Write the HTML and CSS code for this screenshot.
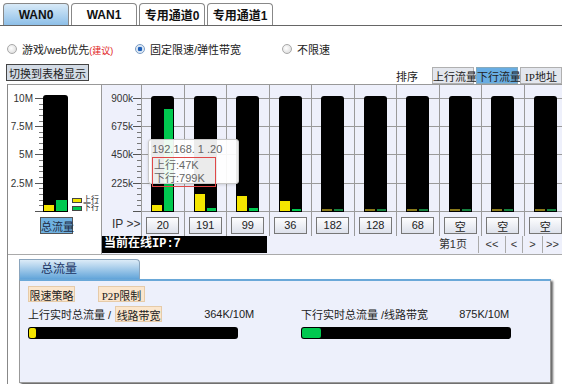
FILE: index.html
```html
<!DOCTYPE html>
<html lang="zh-CN">
<head>
  <meta charset="UTF-8">
  <title>流量监控</title>
  <link rel="stylesheet" href="styles.css">
</head>
<body>

  <div class="tabs">
    <a class="tab active">WAN0</a>
    <a class="tab">WAN1</a>
    <a class="tab">专用通道0</a>
    <a class="tab">专用通道1</a>
  </div>

  <div class="modes">
    <label class="mode mode-game"><span class="radio"></span><span>游戏/web优先<em>(建议)</em></span></label>
    <label class="mode mode-fixed"><span class="radio checked"></span><span>固定限速/弹性带宽</span></label>
    <label class="mode"><span class="radio"></span><span>不限速</span></label>
  </div>

  <div class="toolbar">
    <button class="btn-switch">切换到表格显示</button>
    <div class="sort">
      <span class="sort-label">排序</span>
      <button class="sort-btn">上行流量</button>
      <button class="sort-btn active">下行流量</button>
      <button class="sort-btn serif">IP地址</button>
    </div>
  </div>

  <div class="stats">
    <div class="chart">
      <!-- total traffic -->
      <div class="total">
        <div class="total-plot">
          <div class="axis total-axis">
            <div class="tick-label">10M</div>
            <div class="tick-label">7.5M</div>
            <div class="tick-label">5M</div>
            <div class="tick-label">2.5M</div>
          </div>
          <div class="total-bar">
            <span class="up" style="height:6px"></span>
            <span class="down" style="height:11px"></span>
          </div>
          <div class="legend">
            <div class="legend-item"><span class="swatch up"></span>上行</div>
            <div class="legend-item"><span class="swatch down"></span>下行</div>
          </div>
        </div>
        <button class="total-btn">总流量</button>
      </div>

      <!-- per ip traffic -->
      <div class="main">
        <div class="plot">
          <div class="yaxis">
            <div class="axis main-axis">
              <div class="tick-label">900k</div>
              <div class="tick-label">675k</div>
              <div class="tick-label">450k</div>
              <div class="tick-label">225k</div>
            </div>
            <div class="ip-title">IP &gt;&gt;</div>
          </div>

          <div class="col">
            <div class="cell"><div class="bar"><span class="up" style="height:6px"></span><span class="down" style="height:102px"></span></div></div>
            <div class="ip-cell"><button class="ip-btn">20</button></div>
          </div>
          <div class="col">
            <div class="cell"><div class="bar"><span class="up" style="height:17px"></span><span class="down" style="height:3px"></span></div></div>
            <div class="ip-cell"><button class="ip-btn">191</button></div>
          </div>
          <div class="col">
            <div class="cell"><div class="bar"><span class="up" style="height:15px"></span><span class="down" style="height:3px"></span></div></div>
            <div class="ip-cell"><button class="ip-btn">99</button></div>
          </div>
          <div class="col">
            <div class="cell"><div class="bar"><span class="up" style="height:10px"></span><span class="down" style="height:2px"></span></div></div>
            <div class="ip-cell"><button class="ip-btn">36</button></div>
          </div>
          <div class="col">
            <div class="cell"><div class="bar"><span class="up idle"></span><span class="down idle"></span></div></div>
            <div class="ip-cell"><button class="ip-btn">182</button></div>
          </div>
          <div class="col">
            <div class="cell"><div class="bar"><span class="up idle"></span><span class="down idle"></span></div></div>
            <div class="ip-cell"><button class="ip-btn">128</button></div>
          </div>
          <div class="col">
            <div class="cell"><div class="bar"><span class="up idle"></span><span class="down idle"></span></div></div>
            <div class="ip-cell"><button class="ip-btn">68</button></div>
          </div>
          <div class="col">
            <div class="cell"><div class="bar"><span class="up idle"></span><span class="down idle"></span></div></div>
            <div class="ip-cell"><button class="ip-btn">空</button></div>
          </div>
          <div class="col">
            <div class="cell"><div class="bar"><span class="up idle"></span><span class="down idle"></span></div></div>
            <div class="ip-cell"><button class="ip-btn">空</button></div>
          </div>
          <div class="col">
            <div class="cell"><div class="bar"><span class="up idle"></span><span class="down idle"></span></div></div>
            <div class="ip-cell"><button class="ip-btn">空</button></div>
          </div>
        </div>

        <div class="status">
          <div class="online">当前在线IP:7</div>
          <div class="pager">
            <span class="page-no">第1页</span>
            <a class="page-link first">&lt;&lt;</a>
            <a class="page-link">&lt;</a>
            <a class="page-link">&gt;</a>
            <a class="page-link">&gt;&gt;</a>
          </div>
        </div>

        <div class="tooltip">
          <div class="tip-ip">192.168. 1 .20</div>
          <div class="tip-box">
            <div>上行:47K</div>
            <div>下行:799K</div>
          </div>
        </div>
      </div>
    </div>

    <div class="summary">
      <div class="summary-tab">总流量</div>
      <div class="summary-panel">
        <div class="policy-row">
          <button class="policy-btn">限速策略</button>
          <button class="policy-btn serif">P2P限制</button>
        </div>
        <div class="flow-row">
          <div class="flow">
            <div class="flow-head">
              <span>上行实时总流量 /</span>
              <button class="policy-btn bw-btn">线路带宽</button>
              <span class="flow-value up-value">364K/10M</span>
            </div>
            <div class="meter"><span class="meter-fill up" style="width:7px"></span></div>
          </div>
          <div class="flow">
            <div class="flow-head">
              <span>下行实时总流量 /线路带宽</span>
              <span class="flow-value down-value">875K/10M</span>
            </div>
            <div class="meter"><span class="meter-fill down" style="width:19px"></span></div>
          </div>
        </div>
      </div>
    </div>
  </div>

</body>
</html>
```

FILE: styles.css
```css
* {
  margin: 0;
  padding: 0;
  box-sizing: border-box;
}

body {
  width: 562px;
  height: 384px;
  overflow: hidden;
  font-family: "Liberation Sans", "Noto Sans CJK SC", sans-serif;
  font-size: 11px;
  color: #222;
  background-color: #fff;
}

button {
  padding: 0;
  font-family: inherit;
  font-size: 11px;
  color: #222;
  white-space: nowrap;
}

.serif {
  font-family: "Liberation Serif", "Noto Sans CJK SC", serif;
}

/* tabs */
.tabs {
  display: flex;
  gap: 2px;
  height: 26px;
  padding: 3px 0 0 3px;
  border-bottom: 1px solid #666;
}

.tab {
  width: 66px;
  height: 22px;
  display: flex;
  align-items: center;
  justify-content: center;
  border: 1px solid #888;
  border-bottom: none;
  border-radius: 4px 4px 0 0;
  background-color: #fff;
  font-size: 12px;
  font-weight: bold;
  color: #111;
}

.tab.active {
  background: linear-gradient(#d8eaf8, #8dbfe8);
}

/* modes */
.modes {
  display: flex;
  align-items: center;
  height: 18px;
  margin-top: 14px;
  padding-left: 7px;
}

.mode {
  display: flex;
  align-items: center;
  gap: 5px;
}

.mode-game {
  width: 128px;
}

.mode-fixed {
  width: 147px;
}

.mode em {
  font-style: normal;
  font-size: 9px;
  color: #e02020;
}

.radio {
  width: 10px;
  height: 10px;
  border: 1px solid #a8a8a8;
  border-radius: 50%;
  background: radial-gradient(circle at 40% 40%, #fff, #d6d6d6);
}

.radio.checked {
  background: radial-gradient(circle, #1e5fb8 0 2px, #cfe0f2 2.5px, #e8eef5 4px);
  border-color: #7a9cc4;
}

/* toolbar */
.toolbar {
  display: flex;
  justify-content: space-between;
  align-items: flex-end;
  height: 20px;
  margin-top: 6px;
  padding-left: 6px;
}

.btn-switch {
  height: 17px;
  margin-bottom: 3px;
  padding: 0 2px;
  border: 1px solid #444;
  background-color: #d3dbe5;
}

.sort {
  display: flex;
  align-items: flex-end;
  gap: 2px;
}

.sort-label {
  margin-right: 12px;
  line-height: 14px;
  font-size: 11px;
}

.sort-btn {
  width: 42px;
  height: 17px;
  border: 1px solid #b0b0b0;
  background-color: #e3e6ed;
}

.sort-btn.active {
  background-color: #68ade3;
  border-color: #8ab;
}

/* stats frame */
.stats {
  height: 300px;
  margin-left: 7px;
  border-left: 1px solid #888;
}

.chart {
  display: flex;
  height: 171px;
  border-top: 1px solid #999;
  border-bottom: 1px solid #aaa;
}

.total {
  width: 94px;
  flex: none;
  background-color: #fff;
  border-right: 1px solid #999;
}

.total-plot {
  display: flex;
  height: 127px;
}

.axis {
  padding-top: 8px;
  text-align: right;
  font-size: 10px;
  color: #333;
  background-image:
    repeating-linear-gradient(#555 0 1px, transparent 1px 28.2px),
    repeating-linear-gradient(#777 0 1px, transparent 1px 5.64px);
  background-repeat: no-repeat;
  background-size: 8px 114px, 4px 114px;
  background-position: right 0 top 13px, right 0 top 13px;
}

.tick-label {
  height: 28.2px;
  line-height: 12px;
}

.total-axis {
  width: 35px;
  flex: none;
  padding-right: 10px;
}

.total-bar {
  display: flex;
  flex: none;
  align-items: flex-end;
  gap: 2px;
  width: 25px;
  height: 117px;
  margin-top: 10px;
  padding: 0 1px 1px;
  background-color: #000;
  border-radius: 3px 3px 0 0;
}

.up {
  background-color: #f4e500;
}

.down {
  background-color: #00c94f;
}

.total-bar .up {
  width: 10px;
}

.total-bar .down {
  width: 11px;
}

.legend {
  flex: none;
  align-self: flex-end;
  margin-left: 4px;
  font-size: 8px;
  line-height: 8px;
  white-space: nowrap;
}

.legend-item {
  display: flex;
  align-items: center;
  height: 8px;
}

.swatch {
  width: 10px;
  height: 5px;
  margin-right: 1px;
  border: 1px solid #444;
}

.total-btn {
  display: block;
  width: 33px;
  height: 17px;
  margin: 5px 0 0 32px;
  border: 1px solid #555;
  background-color: #6fb1e1;
  color: #1c2a44;
}

/* per ip chart */
.main {
  position: relative;
  flex: 1;
  overflow: hidden;
  background-color: #eef0fb;
}

.plot {
  display: flex;
}

.yaxis {
  width: 39px;
  flex: none;
}

.main-axis {
  height: 127px;
  padding-right: 8px;
}

.ip-title {
  height: 24px;
  line-height: 24px;
  padding-left: 10px;
  font-size: 12px;
  color: #333;
}

.col {
  width: 42.5px;
  flex: none;
  border-left: 1px solid #9a9a9a;
}

.cell {
  height: 127px;
  padding-top: 11px;
  background-image: repeating-linear-gradient(transparent 0 13px, #9a9a9a 13px 14px, transparent 14px 28.2px);
}

.bar {
  display: flex;
  align-items: flex-end;
  gap: 2px;
  width: 23px;
  height: 116px;
  margin: 0 auto;
  padding: 0 1px 1px;
  background-color: #000;
  border-radius: 3px 3px 0 0;
}

.bar .up {
  width: 10px;
}

.bar .down {
  width: 9px;
}

.bar .idle {
  height: 2px;
}

.bar .up.idle {
  background-color: #8a7a1a;
}

.bar .down.idle {
  background-color: #15813f;
}

.ip-cell {
  display: flex;
  align-items: center;
  justify-content: center;
  height: 24px;
  padding-top: 2px;
}

.ip-btn {
  width: 33px;
  height: 17px;
  border: 1px solid #777;
  background: linear-gradient(#fdfdfe, #dde1eb);
}

.status {
  display: flex;
  height: 17px;
}

.online {
  width: 165px;
  padding-left: 2px;
  background-color: #000;
  color: #fff;
  font-family: "Liberation Mono", "Noto Sans CJK SC", monospace;
  font-size: 12px;
  font-weight: bold;
  line-height: 17px;
}

.pager {
  display: flex;
  flex: 1;
  justify-content: flex-end;
  line-height: 17px;
  font-size: 11px;
  color: #333;
  white-space: nowrap;
}

.page-no {
  margin-right: 11px;
}

.page-link {
  width: 20px;
  text-align: center;
  border-left: 1px solid #aaa;
}

.page-link.first {
  width: 27px;
}

.page-link:nth-child(3) {
  width: 17px;
}

.tooltip {
  position: absolute;
  left: 46px;
  top: 54px;
  width: 91px;
  height: 45px;
  padding: 3px 0 0 3px;
  background-color: rgba(255, 255, 255, 0.92);
  border: 1px solid #c8c8c8;
  border-radius: 3px;
  box-shadow: 0 1px 3px rgba(0, 0, 0, 0.15);
  color: #666;
  font-size: 11px;
  line-height: 13px;
}

.tip-box {
  width: 64px;
  margin-top: 1px;
  padding: 1px 0 1px 1px;
  border: 1px solid #e04848;
}

/* summary */
.summary-tab {
  width: 121px;
  height: 20px;
  margin: 4px 0 0 11px;
  padding-left: 21px;
  border: 1px solid #8aa4bc;
  border-bottom: none;
  border-radius: 0 4px 0 0;
  background: linear-gradient(#dcebf7, #62a5da);
  color: #1a3262;
  font-size: 12px;
  line-height: 19px;
}

.summary-panel {
  width: 532px;
  height: 104px;
  margin-left: 11px;
  padding: 5px 0 0 8px;
  border: 1px solid #999;
  border-top: 2px solid #6aa8d8;
  background-color: #edf0fb;
  box-shadow: 2px 2px 2px #666;
}

.policy-row {
  display: flex;
  gap: 23px;
}

.policy-btn {
  width: 47px;
  height: 16px;
  border: 1px solid #e6cba8;
  background-color: #fbe6cd;
}

.flow-row {
  display: grid;
  grid-template-columns: 273px 1fr;
  margin-top: 3px;
}

.flow-head {
  display: flex;
  align-items: center;
  height: 17px;
  white-space: nowrap;
}

.bw-btn {
  margin-left: 4px;
}

.flow-value {
  font-size: 11px;
}

.up-value {
  margin-left: 42px;
}

.down-value {
  margin-left: 31px;
}

.meter {
  width: 210px;
  height: 12px;
  margin-top: 5px;
  padding: 1px;
  background-color: #000;
  border-radius: 3px;
}

.meter-fill {
  display: block;
  height: 100%;
  border-radius: 2px;
}
```
